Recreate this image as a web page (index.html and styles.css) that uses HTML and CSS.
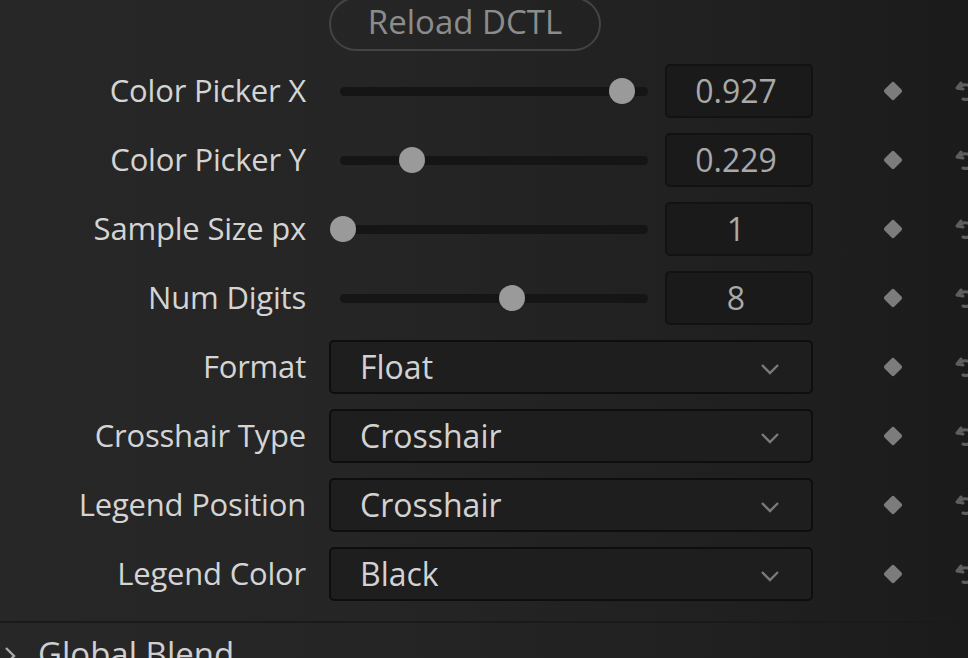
FILE: index.html
```html
<!DOCTYPE html>
<html>
<head>
<meta charset="utf-8">
<link rel="stylesheet" href="styles.css">
</head>
<body>
<div class="panel">
  <div class="top">
    <button class="reload">Reload DCTL</button>
  </div>

  <div class="row">
    <div class="label">Color Picker X</div>
    <div class="control slider-ctl">
      <div class="slider"><div class="track"></div><div class="thumb" style="left: 90.6%"></div></div>
      <div class="value">0.927</div>
    </div>
    <div class="key"><span class="diamond"></span></div>
    <div class="reset"><svg viewBox="0 0 24 24"><path d="M6 4 L2 9 L8 10" /><path d="M3 9 C8 4 16 5 18 11 C20 17 14 22 8 20" /></svg></div>
  </div>

  <div class="row">
    <div class="label">Color Picker Y</div>
    <div class="control slider-ctl">
      <div class="slider"><div class="track"></div><div class="thumb" style="left: 22.4%"></div></div>
      <div class="value">0.229</div>
    </div>
    <div class="key"><span class="diamond"></span></div>
    <div class="reset"><svg viewBox="0 0 24 24"><path d="M6 4 L2 9 L8 10" /><path d="M3 9 C8 4 16 5 18 11 C20 17 14 22 8 20" /></svg></div>
  </div>

  <div class="row">
    <div class="label">Sample Size px</div>
    <div class="control slider-ctl">
      <div class="slider"><div class="track"></div><div class="thumb" style="left: 0%"></div></div>
      <div class="value">1</div>
    </div>
    <div class="key"><span class="diamond"></span></div>
    <div class="reset"><svg viewBox="0 0 24 24"><path d="M6 4 L2 9 L8 10" /><path d="M3 9 C8 4 16 5 18 11 C20 17 14 22 8 20" /></svg></div>
  </div>

  <div class="row">
    <div class="label">Num Digits</div>
    <div class="control slider-ctl">
      <div class="slider"><div class="track"></div><div class="thumb" style="left: 54.9%"></div></div>
      <div class="value">8</div>
    </div>
    <div class="key"><span class="diamond"></span></div>
    <div class="reset"><svg viewBox="0 0 24 24"><path d="M6 4 L2 9 L8 10" /><path d="M3 9 C8 4 16 5 18 11 C20 17 14 22 8 20" /></svg></div>
  </div>

  <div class="row">
    <div class="label">Format</div>
    <div class="control">
      <div class="select"><span>Float</span><svg class="chev" viewBox="0 0 20 12"><path d="M2 2 L10 10 L18 2" /></svg></div>
    </div>
    <div class="key"><span class="diamond"></span></div>
    <div class="reset"><svg viewBox="0 0 24 24"><path d="M6 4 L2 9 L8 10" /><path d="M3 9 C8 4 16 5 18 11 C20 17 14 22 8 20" /></svg></div>
  </div>

  <div class="row">
    <div class="label">Crosshair Type</div>
    <div class="control">
      <div class="select"><span>Crosshair</span><svg class="chev" viewBox="0 0 20 12"><path d="M2 2 L10 10 L18 2" /></svg></div>
    </div>
    <div class="key"><span class="diamond"></span></div>
    <div class="reset"><svg viewBox="0 0 24 24"><path d="M6 4 L2 9 L8 10" /><path d="M3 9 C8 4 16 5 18 11 C20 17 14 22 8 20" /></svg></div>
  </div>

  <div class="row">
    <div class="label">Legend Position</div>
    <div class="control">
      <div class="select"><span>Crosshair</span><svg class="chev" viewBox="0 0 20 12"><path d="M2 2 L10 10 L18 2" /></svg></div>
    </div>
    <div class="key"><span class="diamond"></span></div>
    <div class="reset"><svg viewBox="0 0 24 24"><path d="M6 4 L2 9 L8 10" /><path d="M3 9 C8 4 16 5 18 11 C20 17 14 22 8 20" /></svg></div>
  </div>

  <div class="row">
    <div class="label">Legend Color</div>
    <div class="control">
      <div class="select"><span>Black</span><svg class="chev" viewBox="0 0 20 12"><path d="M2 2 L10 10 L18 2" /></svg></div>
    </div>
    <div class="key"><span class="diamond"></span></div>
    <div class="reset"><svg viewBox="0 0 24 24"><path d="M6 4 L2 9 L8 10" /><path d="M3 9 C8 4 16 5 18 11 C20 17 14 22 8 20" /></svg></div>
  </div>

  <div class="section">
    <svg class="sec-chev" viewBox="0 0 12 20"><path d="M2 2 L10 10 L2 18" /></svg>
    <span>Global Blend</span>
  </div>
</div>
</body>
</html>
```

FILE: styles.css
```css
html, body {
  margin: 0;
  padding: 0;
  background: #1c1c1c;
}

.panel {
  width: 968px;
  height: 658px;
  overflow: hidden;
  background: linear-gradient(90deg, #272727 0%, #252525 40%, #202020 75%, #1b1b1b 100%);
  font-family: "Open Sans", "Noto Sans", sans-serif;
  color: #cfcfcf;
}

.top {
  height: 56px;
  display: flex;
  padding-left: 329px;
}

.reload {
  margin-top: -3px;
  width: 272px;
  height: 54px;
  border: 2px solid #444444;
  border-radius: 27px;
  background: transparent;
  color: #8c8c8c;
  font-family: "Open Sans", "Noto Sans", sans-serif;
  font-size: 33px;
  padding: 0 0 5px 0;
  box-sizing: border-box;
}

.row {
  height: 69px;
  display: grid;
  grid-template-columns: 306px 507px 142px 13px;
  align-items: center;
}

.label {
  text-align: right;
  font-size: 31px;
  color: #d4d4d4;
  letter-spacing: -0.2px;
  white-space: nowrap;
  padding-bottom: 1px;
}

.control {
  margin-left: 23px;
  height: 54px;
  display: flex;
  align-items: center;
}

.slider-ctl {
  justify-content: space-between;
}

.slider {
  position: relative;
  margin-left: 11px;
  width: 308px;
  height: 26px;
}

.track {
  position: absolute;
  left: 0;
  right: 0;
  top: 9px;
  height: 9px;
  border-radius: 5px;
  background: #151515;
}

.thumb {
  position: absolute;
  top: 0;
  width: 26px;
  height: 26px;
  margin-left: -10px;
  border-radius: 50%;
  background: #9a9a9a;
}

.value {
  width: 148px;
  height: 54px;
  box-sizing: border-box;
  background: #1a1a1a;
  border: 2px solid #121212;
  border-radius: 5px;
  display: flex;
  align-items: center;
  justify-content: center;
  font-size: 32px;
  color: #a9a9a9;
  padding-right: 6px;
}

.select {
  width: 484px;
  height: 54px;
  box-sizing: border-box;
  background: #1e1e1e;
  border: 2px solid #0e0e0e;
  border-radius: 5px;
  display: flex;
  align-items: center;
  justify-content: space-between;
  padding: 0 31px 0 29px;
  font-size: 32px;
  color: #d2d2d2;
}

.chev {
  width: 20px;
  height: 12px;
  margin-top: 4px;
  fill: none;
  stroke: #7a7a7a;
  stroke-width: 2.4;
}

.key {
  display: flex;
  align-items: center;
}

.diamond {
  display: block;
  width: 14px;
  height: 14px;
  background: #7c7c7c;
  border-radius: 2px;
  transform: rotate(45deg);
  margin-left: 73px;
}

.reset {
  display: flex;
  align-items: center;
}

.reset svg {
  flex: none;
  width: 24px;
  height: 24px;
  fill: none;
  stroke: #5e5e5e;
  stroke-width: 3;
  stroke-linecap: round;
  stroke-linejoin: round;
}

.section {
  margin-top: 13px;
  border-top: 2px solid #1a1a1a;
  height: 60px;
  display: flex;
  align-items: flex-start;
  padding-top: 8px;
  box-sizing: border-box;
  font-size: 33px;
  color: #cfcfcf;
}

.sec-chev {
  width: 12px;
  height: 20px;
  margin: 15px 0 0 4px;
  fill: none;
  stroke: #aaa;
  stroke-width: 2.4;
}

.section span {
  margin-left: 22px;
}
```
